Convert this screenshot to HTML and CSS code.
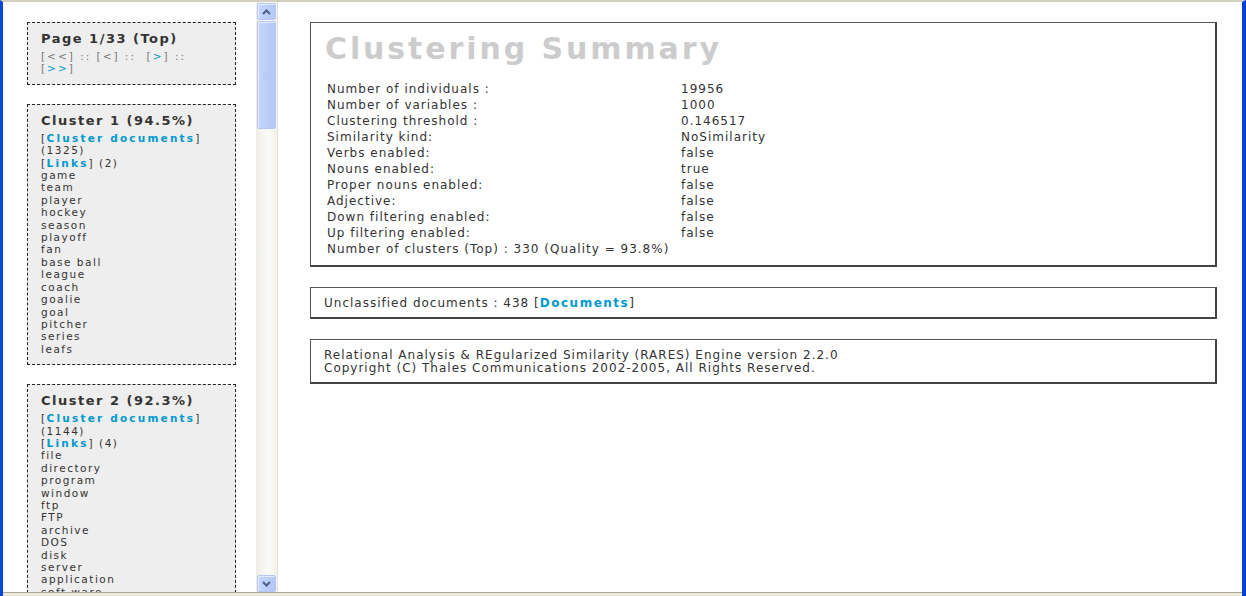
FILE: index.html
```html
<!DOCTYPE html>
<html lang="en">
<head>
    <meta charset="UTF-8">
    <title>RARES - Clustering Summary</title>
    <link rel="stylesheet" href="styles.css">
</head>
<body>
    <div class="window">
        <div class="frames">
            <!-- Left frame: cluster navigation -->
            <div class="nav-frame">
                <div class="nav-content">
                    <div class="nav-box">
                        <h2 class="nav-title">Page 1/33 (Top)</h2>
                        <div class="pager">
                            [&lt;&lt;] :: [&lt;] ::&nbsp; [<a href="#">&gt;</a>] ::<br>
                            [<a href="#">&gt;&gt;</a>]
                        </div>
                    </div>

                    <div class="nav-box">
                        <h2 class="nav-title">Cluster 1 (94.5%)</h2>
                        <div class="terms">
                            [<a class="strong" href="#">Cluster documents</a>]<br>(1325)<br>
                            [<a class="strong" href="#">Links</a>] (2)<br>
                            game<br>team<br>player<br>hockey<br>season<br>playoff<br>fan<br>base ball<br>
                            league<br>coach<br>goalie<br>goal<br>pitcher<br>series<br>leafs
                        </div>
                    </div>

                    <div class="nav-box">
                        <h2 class="nav-title">Cluster 2 (92.3%)</h2>
                        <div class="terms">
                            [<a class="strong" href="#">Cluster documents</a>]<br>(1144)<br>
                            [<a class="strong" href="#">Links</a>] (4)<br>
                            file<br>directory<br>program<br>window<br>ftp<br>FTP<br>archive<br>DOS<br>
                            disk<br>server<br>application<br>soft ware
                        </div>
                    </div>
                </div>

                <!-- XP style scrollbar -->
                <div class="scrollbar">
                    <div class="sb-button">
                        <svg width="9" height="6" viewBox="0 0 9 6"><path d="M1 5 L4.5 1.5 L8 5" fill="none" stroke="#4d6185" stroke-width="2"/></svg>
                    </div>
                    <div class="sb-thumb">
                        <svg width="8" height="8" viewBox="0 0 8 8"><path d="M0 1.5 H8 M0 3.5 H8 M0 5.5 H8 M0 7.5 H8" stroke="#b4c8f6" stroke-width="1"/></svg>
                    </div>
                    <div class="sb-track"></div>
                    <div class="sb-button">
                        <svg width="9" height="6" viewBox="0 0 9 6"><path d="M1 1 L4.5 4.5 L8 1" fill="none" stroke="#4d6185" stroke-width="2"/></svg>
                    </div>
                </div>
            </div>

            <!-- Right frame: summary -->
            <div class="main-frame">
                <div class="panel">
                    <h1 class="summary-title">Clustering Summary</h1>
                    <table class="summary">
                        <tr><td class="label">Number of individuals :</td><td>19956</td></tr>
                        <tr><td class="label">Number of variables :</td><td>1000</td></tr>
                        <tr><td class="label">Clustering threshold :</td><td>0.146517</td></tr>
                        <tr><td class="label">Similarity kind:</td><td>NoSimilarity</td></tr>
                        <tr><td class="label">Verbs enabled:</td><td>false</td></tr>
                        <tr><td class="label">Nouns enabled:</td><td>true</td></tr>
                        <tr><td class="label">Proper nouns enabled:</td><td>false</td></tr>
                        <tr><td class="label">Adjective:</td><td>false</td></tr>
                        <tr><td class="label">Down filtering enabled:</td><td>false</td></tr>
                        <tr><td class="label">Up filtering enabled:</td><td>false</td></tr>
                        <tr><td colspan="2">Number of clusters (Top) : 330 (Quality = 93.8%)</td></tr>
                    </table>
                </div>

                <div class="panel panel-line">
                    Unclassified documents : 438 [<a class="strong" href="#">Documents</a>]
                </div>

                <div class="panel panel-credits">
                    Relational Analysis &amp; REgularized Similarity (RARES) Engine version 2.2.0<br>
                    Copyright (C) Thales Communications 2002-2005, All Rights Reserved.
                </div>
            </div>
        </div>
        <div class="statusline"></div>
    </div>
</body>
</html>
```

FILE: styles.css
```css
* {
    margin: 0;
    padding: 0;
    box-sizing: border-box;
}

body {
    font-family: "DejaVu Sans", Verdana, sans-serif;
    font-size: 12px;
    letter-spacing: 1px;
    color: #333333;
    background: #ffffff;
    overflow: hidden;
}

a {
    color: #0099cc;
    text-decoration: none;
}

a.strong {
    font-weight: bold;
    letter-spacing: 1.5px;
}

.window {
    height: 596px;
    display: flex;
    flex-direction: column;
    border-top: 2px solid #d4d0bf;
    border-left: 3px solid #0a45dc;
    border-right: 4px solid #0a3fd4;
}

.frames {
    flex: 1;
    display: flex;
    min-height: 0;
}

/* left frame */

.nav-frame {
    width: 275px;
    display: flex;
    border-right: 1px solid #e4e2da;
}

.nav-content {
    flex: 1;
    overflow: hidden;
    padding: 20px 20px 0 24px;
    display: flex;
    flex-direction: column;
    gap: 19px;
}

.nav-box {
    flex-shrink: 0;
    background: #eeeeee;
    border: 1px dashed #222222;
    padding: 8px 13px 9px 13px;
    font-size: 10.5px;
    letter-spacing: 1.5px;
}

.nav-box a.strong {
    letter-spacing: 2.2px;
}

.nav-title {
    font-size: 13px;
    line-height: 16px;
    letter-spacing: 1.5px;
    font-weight: bold;
    color: #333333;
    margin-bottom: 3px;
}

.pager {
    line-height: 12.4px;
    letter-spacing: 2px;
    color: #777777;
}

.terms {
    line-height: 12.4px;
}

/* scrollbar */

.scrollbar {
    width: 21px;
    display: flex;
    flex-direction: column;
    padding: 1px 1px 0 1px;
    background: linear-gradient(to right, #eeede5, #fbfbf8 60%, #f3f1ea);
}

.sb-button,
.sb-thumb {
    display: flex;
    align-items: center;
    justify-content: center;
    border: 1px solid #b5c8f3;
    border-radius: 2px;
    background: linear-gradient(to right, #c5d6fc, #bccffa 50%, #b3c8f6);
    box-shadow: inset 1px 1px 0 #e4ecfe;
}

.sb-button {
    height: 17px;
}

.sb-thumb {
    height: 108px;
    margin-top: 1px;
}

.sb-track {
    flex: 1;
}

/* right frame */

.main-frame {
    flex: 1;
    padding: 20px 25px 0 32px;
    display: flex;
    flex-direction: column;
    gap: 20px;
}

.panel {
    border-top: 1px solid #555555;
    border-left: 1px solid #555555;
    border-right: 2px solid #444444;
    border-bottom: 2px solid #444444;
    padding: 8px 16px 8px 16px;
}

.summary-title {
    font-size: 30px;
    line-height: 36px;
    letter-spacing: 2.9px;
    font-weight: bold;
    color: #cccccc;
    margin: 0 0 14px -2px;
}

.summary {
    border-collapse: collapse;
}

.summary td {
    padding: 0;
    line-height: 16px;
    white-space: nowrap;
}

.summary td.label {
    width: 354px;
}

.panel-line {
    padding: 7px 13px 6px 13px;
    line-height: 16px;
}

.panel-credits {
    padding: 9px 13px 7px 13px;
    line-height: 13px;
}

.statusline {
    height: 4px;
    border-top: 1px solid #aca899;
    background: #ece9d8;
}
```
